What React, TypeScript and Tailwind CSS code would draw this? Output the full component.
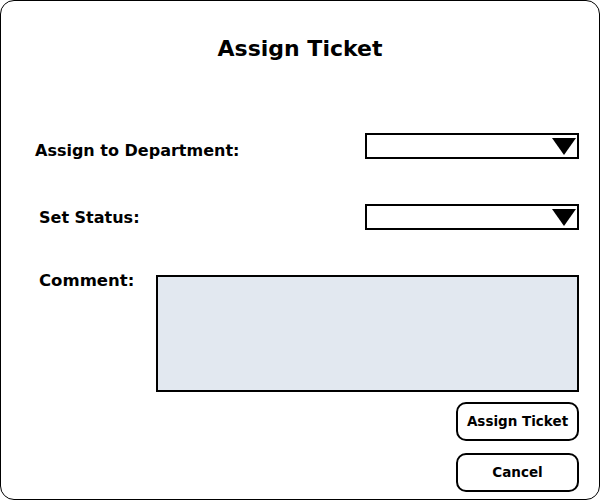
import React from "react";

function Select() {
  return (
    <div className="w-[214px] h-[26px] border-2 border-black bg-white flex items-center justify-end pr-[1px]">
      <svg width="24" height="17" viewBox="0 0 24 17">
        <polygon points="0,0 24,0 12,17" fill="black" />
      </svg>
    </div>
  );
}

export default function App() {
  return (
    <div
      className="w-[600px] h-[500px] border border-black rounded-[14px] bg-white flex flex-col text-black"
      style={{ fontFamily: "'DejaVu Sans', 'Noto Sans', sans-serif" }}
    >
      <h1 className="text-[22px] leading-[30px] font-bold text-center mt-[33px]">Assign Ticket</h1>

      <div className="flex items-start mt-[69px]">
        <div className="ml-[34px] mt-[7px] text-[16px] leading-[22px] font-bold">Assign to Department:</div>
        <div className="ml-auto mr-[20px]">
          <Select />
        </div>
      </div>

      <div className="flex items-start mt-[42px]">
        <div className="ml-[38px] mt-[3px] text-[16px] leading-[22px] font-bold">Set Status:</div>
        <div className="ml-auto mr-[20px]">
          <Select />
        </div>
      </div>

      <div className="flex items-start mt-[45px]">
        <div className="ml-[38px] mt-[-5px] text-[16.5px] leading-[22px] font-bold w-[117px]">Comment:</div>
        <div className="ml-auto mr-[20px] w-[423px] h-[117px] border-2 border-black bg-[#e2e8f0]" />
      </div>

      <div className="flex flex-col items-end mr-[20px] mt-[10px] gap-[12px]">
        <button className="w-[123px] h-[39px] border-2 border-black rounded-[10px] bg-white text-[13.5px] font-bold">
          Assign Ticket
        </button>
        <button className="w-[123px] h-[39px] border-2 border-black rounded-[10px] bg-white text-[13.5px] font-bold">
          Cancel
        </button>
      </div>
    </div>
  );
}
